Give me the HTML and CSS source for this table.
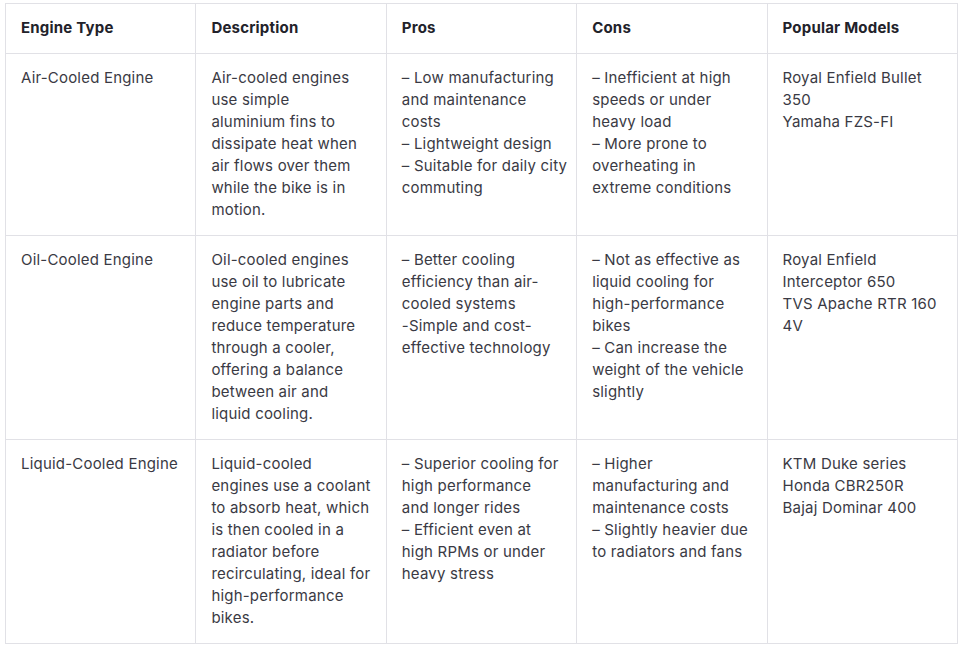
FILE: index.html
```html
<!DOCTYPE html>
<html lang="en">
<head>
<meta charset="utf-8">
<title>Engine Types</title>
<link rel="stylesheet" href="styles.css">
</head>
<body>
<div class="wrap">
<table class="engines">
  <thead>
    <tr>
      <th>Engine Type</th>
      <th>Description</th>
      <th>Pros</th>
      <th>Cons</th>
      <th>Popular Models</th>
    </tr>
  </thead>
  <tbody>
    <tr>
      <td>Air-Cooled Engine</td>
      <td>Air-cooled engines<br>use simple<br>aluminium fins to<br>dissipate heat when<br>air flows over them<br>while the bike is in<br>motion.</td>
      <td>– Low manufacturing<br>and maintenance<br>costs<br>– Lightweight design<br>– Suitable for daily city<br>commuting</td>
      <td>– Inefficient at high<br>speeds or under<br>heavy load<br>– More prone to<br>overheating in<br>extreme conditions</td>
      <td>Royal Enfield Bullet<br>350<br>Yamaha FZS-FI</td>
    </tr>
    <tr>
      <td>Oil-Cooled Engine</td>
      <td>Oil-cooled engines<br>use oil to lubricate<br>engine parts and<br>reduce temperature<br>through a cooler,<br>offering a balance<br>between air and<br>liquid cooling.</td>
      <td>– Better cooling<br>efficiency than air-<br>cooled systems<br>-Simple and cost-<br>effective technology</td>
      <td>– Not as effective as<br>liquid cooling for<br>high-performance<br>bikes<br>– Can increase the<br>weight of the vehicle<br>slightly</td>
      <td>Royal Enfield<br>Interceptor 650<br>TVS Apache RTR 160<br>4V</td>
    </tr>
    <tr>
      <td>Liquid-Cooled Engine</td>
      <td>Liquid-cooled<br>engines use a coolant<br>to absorb heat, which<br>is then cooled in a<br>radiator before<br>recirculating, ideal for<br>high-performance<br>bikes.</td>
      <td>– Superior cooling for<br>high performance<br>and longer rides<br>– Efficient even at<br>high RPMs or under<br>heavy stress</td>
      <td>– Higher<br>manufacturing and<br>maintenance costs<br>– Slightly heavier due<br>to radiators and fans</td>
      <td>KTM Duke series<br>Honda CBR250R<br>Bajaj Dominar 400</td>
    </tr>
  </tbody>
</table>
</div>
</body>
</html>
```

FILE: styles.css
```css
html, body {
  margin: 0;
  padding: 0;
  background: #ffffff;
}

.wrap {
  padding: 3px 8px 0 5px;
}

.engines {
  width: 953px;
  border-collapse: collapse;
  table-layout: fixed;
  font-family: "Inter", "Open Sans", sans-serif;
  font-size: 15px;
  line-height: 22px;
  letter-spacing: 0.2px;
  color: #3a3a44;
}

.engines th,
.engines td {
  border: 1px solid #e1e1e6;
  padding: 13px 14px 14px 15px;
  text-align: left;
  vertical-align: top;
  white-space: nowrap;
}

.engines th {
  font-weight: 700;
  color: #22222a;
  padding-top: 13px;
  padding-bottom: 14px;
}
```
